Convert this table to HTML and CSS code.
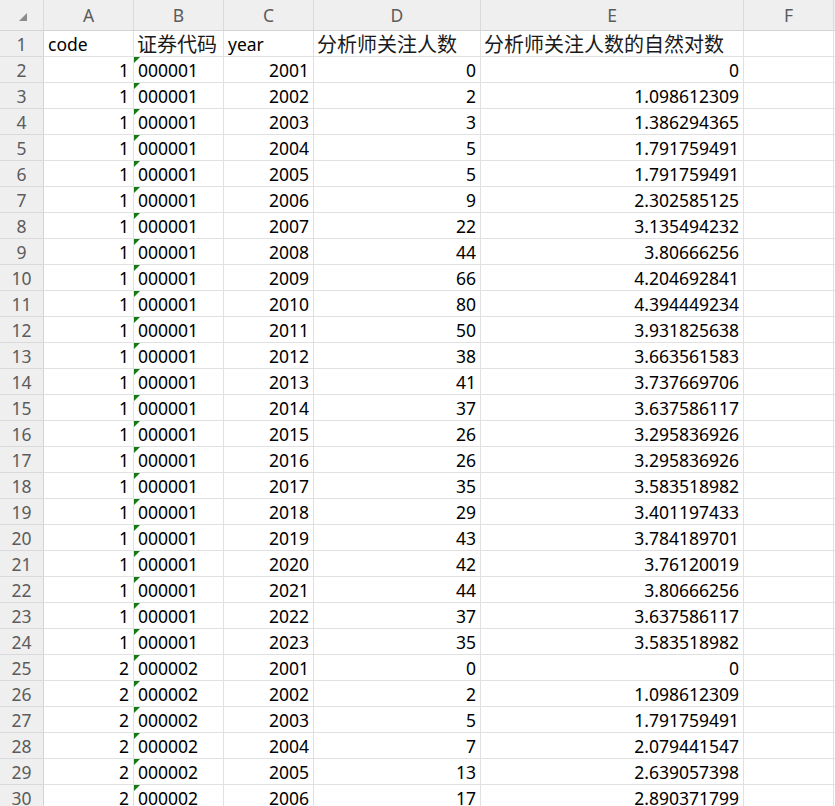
FILE: index.html
```html
<!DOCTYPE html>
<html>
<head>
<meta charset="utf-8">
<link rel="stylesheet" href="styles.css">
</head>
<body>
<div class="sheet">
  <div class="ch corner"><span class="tri"></span></div>
  <div class="ch">A</div><div class="ch">B</div><div class="ch">C</div><div class="ch">D</div><div class="ch">E</div><div class="ch">F</div><div class="ch rest"></div>

  <div class="rh">1</div><div class="c">code</div><div class="c cjk">证券代码</div><div class="c">year</div><div class="c cjk">分析师关注人数</div><div class="c cjk">分析师关注人数的自然对数</div><div class="c"></div><div class="c rest"></div>
  <div class="rh">2</div><div class="c n">1</div><div class="c t">000001</div><div class="c n">2001</div><div class="c n">0</div><div class="c n">0</div><div class="c"></div><div class="c rest"></div>
  <div class="rh">3</div><div class="c n">1</div><div class="c t">000001</div><div class="c n">2002</div><div class="c n">2</div><div class="c n">1.098612309</div><div class="c"></div><div class="c rest"></div>
  <div class="rh">4</div><div class="c n">1</div><div class="c t">000001</div><div class="c n">2003</div><div class="c n">3</div><div class="c n">1.386294365</div><div class="c"></div><div class="c rest"></div>
  <div class="rh">5</div><div class="c n">1</div><div class="c t">000001</div><div class="c n">2004</div><div class="c n">5</div><div class="c n">1.791759491</div><div class="c"></div><div class="c rest"></div>
  <div class="rh">6</div><div class="c n">1</div><div class="c t">000001</div><div class="c n">2005</div><div class="c n">5</div><div class="c n">1.791759491</div><div class="c"></div><div class="c rest"></div>
  <div class="rh">7</div><div class="c n">1</div><div class="c t">000001</div><div class="c n">2006</div><div class="c n">9</div><div class="c n">2.302585125</div><div class="c"></div><div class="c rest"></div>
  <div class="rh">8</div><div class="c n">1</div><div class="c t">000001</div><div class="c n">2007</div><div class="c n">22</div><div class="c n">3.135494232</div><div class="c"></div><div class="c rest"></div>
  <div class="rh">9</div><div class="c n">1</div><div class="c t">000001</div><div class="c n">2008</div><div class="c n">44</div><div class="c n">3.80666256</div><div class="c"></div><div class="c rest"></div>
  <div class="rh">10</div><div class="c n">1</div><div class="c t">000001</div><div class="c n">2009</div><div class="c n">66</div><div class="c n">4.204692841</div><div class="c"></div><div class="c rest"></div>
  <div class="rh">11</div><div class="c n">1</div><div class="c t">000001</div><div class="c n">2010</div><div class="c n">80</div><div class="c n">4.394449234</div><div class="c"></div><div class="c rest"></div>
  <div class="rh">12</div><div class="c n">1</div><div class="c t">000001</div><div class="c n">2011</div><div class="c n">50</div><div class="c n">3.931825638</div><div class="c"></div><div class="c rest"></div>
  <div class="rh">13</div><div class="c n">1</div><div class="c t">000001</div><div class="c n">2012</div><div class="c n">38</div><div class="c n">3.663561583</div><div class="c"></div><div class="c rest"></div>
  <div class="rh">14</div><div class="c n">1</div><div class="c t">000001</div><div class="c n">2013</div><div class="c n">41</div><div class="c n">3.737669706</div><div class="c"></div><div class="c rest"></div>
  <div class="rh">15</div><div class="c n">1</div><div class="c t">000001</div><div class="c n">2014</div><div class="c n">37</div><div class="c n">3.637586117</div><div class="c"></div><div class="c rest"></div>
  <div class="rh">16</div><div class="c n">1</div><div class="c t">000001</div><div class="c n">2015</div><div class="c n">26</div><div class="c n">3.295836926</div><div class="c"></div><div class="c rest"></div>
  <div class="rh">17</div><div class="c n">1</div><div class="c t">000001</div><div class="c n">2016</div><div class="c n">26</div><div class="c n">3.295836926</div><div class="c"></div><div class="c rest"></div>
  <div class="rh">18</div><div class="c n">1</div><div class="c t">000001</div><div class="c n">2017</div><div class="c n">35</div><div class="c n">3.583518982</div><div class="c"></div><div class="c rest"></div>
  <div class="rh">19</div><div class="c n">1</div><div class="c t">000001</div><div class="c n">2018</div><div class="c n">29</div><div class="c n">3.401197433</div><div class="c"></div><div class="c rest"></div>
  <div class="rh">20</div><div class="c n">1</div><div class="c t">000001</div><div class="c n">2019</div><div class="c n">43</div><div class="c n">3.784189701</div><div class="c"></div><div class="c rest"></div>
  <div class="rh">21</div><div class="c n">1</div><div class="c t">000001</div><div class="c n">2020</div><div class="c n">42</div><div class="c n">3.76120019</div><div class="c"></div><div class="c rest"></div>
  <div class="rh">22</div><div class="c n">1</div><div class="c t">000001</div><div class="c n">2021</div><div class="c n">44</div><div class="c n">3.80666256</div><div class="c"></div><div class="c rest"></div>
  <div class="rh">23</div><div class="c n">1</div><div class="c t">000001</div><div class="c n">2022</div><div class="c n">37</div><div class="c n">3.637586117</div><div class="c"></div><div class="c rest"></div>
  <div class="rh">24</div><div class="c n">1</div><div class="c t">000001</div><div class="c n">2023</div><div class="c n">35</div><div class="c n">3.583518982</div><div class="c"></div><div class="c rest"></div>
  <div class="rh">25</div><div class="c n">2</div><div class="c t">000002</div><div class="c n">2001</div><div class="c n">0</div><div class="c n">0</div><div class="c"></div><div class="c rest"></div>
  <div class="rh">26</div><div class="c n">2</div><div class="c t">000002</div><div class="c n">2002</div><div class="c n">2</div><div class="c n">1.098612309</div><div class="c"></div><div class="c rest"></div>
  <div class="rh">27</div><div class="c n">2</div><div class="c t">000002</div><div class="c n">2003</div><div class="c n">5</div><div class="c n">1.791759491</div><div class="c"></div><div class="c rest"></div>
  <div class="rh">28</div><div class="c n">2</div><div class="c t">000002</div><div class="c n">2004</div><div class="c n">7</div><div class="c n">2.079441547</div><div class="c"></div><div class="c rest"></div>
  <div class="rh">29</div><div class="c n">2</div><div class="c t">000002</div><div class="c n">2005</div><div class="c n">13</div><div class="c n">2.639057398</div><div class="c"></div><div class="c rest"></div>
  <div class="rh">30</div><div class="c n">2</div><div class="c t">000002</div><div class="c n">2006</div><div class="c n">17</div><div class="c n">2.890371799</div><div class="c"></div><div class="c rest"></div>
</div>
</body>
</html>
```
FILE: styles.css
```css
html, body {
  margin: 0;
  padding: 0;
  background: #ffffff;
  overflow: hidden;
}

.sheet {
  display: grid;
  grid-template-columns: 44px 90px 90px 90px 167px 263px 90px 1fr;
  grid-template-rows: 31px;
  grid-auto-rows: 26px;
  font-family: "Noto Sans", "Noto Sans CJK SC", sans-serif;
  font-size: 17.5px;
  color: #000000;
}

.ch, .rh, .c {
  box-sizing: border-box;
  border-right: 1px solid #e1e1e1;
  border-bottom: 1px solid #e1e1e1;
  white-space: nowrap;
  overflow: visible;
  display: flex;
  align-items: center;
}

.ch {
  background: #efefef;
  color: #5c5c5c;
  justify-content: center;
  border-right-color: #dadada;
  border-bottom-color: #d4d4d4;
  font-size: 17.5px;
}

.corner {
  position: relative;
}

.tri {
  position: absolute;
  left: 19px;
  top: 13px;
  width: 0;
  height: 0;
  border-left: 8px solid transparent;
  border-bottom: 8px solid #8c8c8c;
}

.rh {
  background: #efefef;
  color: #5c5c5c;
  justify-content: center;
  border-right-color: #d4d4d4;
  border-bottom-color: #dadada;
  font-size: 17.5px;
}

.c {
  padding: 0 4px 0 4px;
  position: relative;
}

.n {
  justify-content: flex-end;
}

.cjk {
  font-size: 20px;
  color: #1a1a1a;
  padding-left: 3px;
}

.t::before {
  content: "";
  position: absolute;
  left: 0;
  top: 0;
  width: 0;
  height: 0;
  border-top: 6px solid #157a15;
  border-right: 6px solid transparent;
}

.ch.rest {
  border-right: none;
}

.c.rest {
  border-right: none;
}
```
